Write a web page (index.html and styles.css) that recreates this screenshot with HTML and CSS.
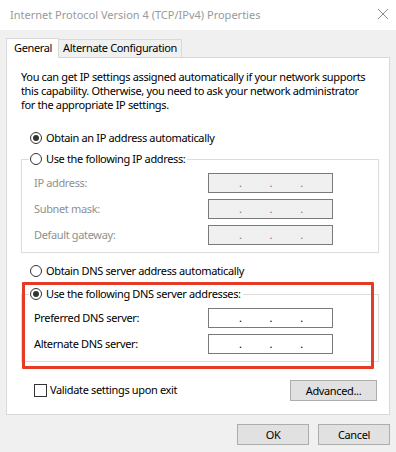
FILE: index.html
```html
<!DOCTYPE html>
<html>
<head>
<meta charset="utf-8">
<link rel="stylesheet" href="styles.css">
</head>
<body>
<div class="window">
  <div class="titlebar">
    <span class="title">Internet Protocol Version 4 (TCP/IPv4) Properties</span>
    <svg class="close" width="12" height="12" viewBox="0 0 12 12"><path d="M1 1 L11 11 M11 1 L1 11" stroke="#8a8a8a" stroke-width="1" fill="none"/></svg>
  </div>
  <div class="body">
    <div class="tabs">
      <div class="tab active">General</div>
      <div class="tab">Alternate Configuration</div>
    </div>
    <div class="panel">
      <p class="desc">You can get IP settings assigned automatically if your network supports<br>this capability. Otherwise, you need to ask your network administrator<br>for the appropriate IP settings.</p>
      <div class="option first"><span class="radio checked"></span><span>Obtain an IP address automatically</span></div>
      <fieldset class="group g1">
        <legend><span class="radio"></span><span>Use the following IP address:</span></legend>
        <div class="rows">
          <div class="field disabled"><span class="flabel">IP address:</span><span class="ip"><i></i>.<i></i>.<i></i>.<i></i></span></div>
          <div class="field disabled"><span class="flabel">Subnet mask:</span><span class="ip"><i></i>.<i></i>.<i></i>.<i></i></span></div>
          <div class="field disabled"><span class="flabel">Default gateway:</span><span class="ip"><i></i>.<i></i>.<i></i>.<i></i></span></div>
        </div>
      </fieldset>
      <div class="option dns"><span class="radio"></span><span>Obtain DNS server address automatically</span></div>
      <fieldset class="group g2">
        <legend><span class="radio checked"></span><span>Use the following DNS server addresses:</span></legend>
        <div class="rows">
          <div class="field"><span class="flabel">Preferred DNS server:</span><span class="ip"><i></i>.<i></i>.<i></i>.<i></i></span></div>
          <div class="field"><span class="flabel">Alternate DNS server:</span><span class="ip"><i></i>.<i></i>.<i></i>.<i></i></span></div>
        </div>
      </fieldset>
      <div class="bottomrow">
        <div class="check"><span class="box"></span><span>Validate settings upon exit</span></div>
        <div class="btn adv">Advanced...</div>
      </div>
      <div class="highlight"></div>
    </div>
    <div class="buttons">
      <div class="btn">OK</div>
      <div class="btn">Cancel</div>
    </div>
  </div>
</div>
</body>
</html>
```

FILE: styles.css
```css
* { box-sizing: border-box; }
html, body { margin: 0; padding: 0; }
body {
  font-family: "Noto Sans", "Open Sans", sans-serif;
  font-size: 11px;
  line-height: 16px;
  letter-spacing: -0.35px;
  color: #000;
  background: #f0f0f0;
  white-space: nowrap;
}
.window {
  width: 396px;
  height: 452px;
  background: #f0f0f0;
  overflow: hidden;
}
.titlebar {
  height: 30px;
  background: #fff;
  display: flex;
  align-items: center;
  justify-content: space-between;
  padding: 0 7px 0 10px;
}
.title { color: #999; font-size: 11px; line-height: 16px; letter-spacing: 0; margin-top: -1px; }
.close { display: block; margin-top: -2px; }
.body { padding: 8px 6px 0 6px; }
.tabs {
  display: flex;
  align-items: flex-end;
  margin-bottom: -1px;
  position: relative;
  z-index: 1;
}
.tab {
  height: 18px;
  border: 1px solid #d9d9d9;
  border-bottom: none;
  background: #f0f0f0;
  padding: 0 4px 0 4px;
  line-height: 16px;
  margin-bottom: 1px;
  margin-left: -1px;
}
.tab.active {
  height: 20px;
  background: #fff;
  padding: 0 6px 0 7px;
  margin-left: 0;
  margin-bottom: 0;
  line-height: 18px;
  position: relative;
  z-index: 2;
}
.panel {
  position: relative;
  height: 358px;
  background: #fff;
  border: 1px solid #d9d9d9;
  padding: 12px 10px 0 14px;
}
.desc { margin: 0; line-height: 14px; height: 42px; }
.option {
  display: flex;
  align-items: center;
  height: 16px;
  padding-left: 9px;
}
.option.first { margin-top: 18px; }
.option.dns { margin-top: 10px; }
.radio {
  width: 12px;
  height: 12px;
  border: 1px solid #333;
  border-radius: 50%;
  background: #fff;
  margin-right: 4px;
  position: relative;
  flex: none;
}
.radio.checked::after {
  content: "";
  position: absolute;
  left: 2px;
  top: 2px;
  width: 6px;
  height: 6px;
  border-radius: 50%;
  background: #333;
}
.group {
  margin: 5px 0 0 0;
  padding: 0;
  border: 1px solid #dcdcdc;
  min-width: 0;
}
.group.g2 { margin-top: 7px; }
.group legend {
  display: flex;
  align-items: center;
  height: 16px;
  padding: 0 2px 0 1px;
  margin-left: 7px;
}
.rows {
  display: flex;
  flex-direction: column;
  gap: 6px;
  padding: 6px 0 7px 12px;
}
.field {
  display: flex;
  align-items: center;
  height: 20px;
}
.flabel { width: 174px; flex: none; }
.field.disabled .flabel { color: #8f8f8f; }
.ip {
  width: 125px;
  height: 20px;
  border: 1px solid #7a7a7a;
  background: #fff;
  display: flex;
  align-items: center;
  padding-left: 2px;
  line-height: 16px;
  font-size: 11px;
}
.ip i { width: 28px; flex: none; }
.ip i:last-child { display: none; }
.field.disabled .ip { background: #f0f0f0; color: #777; }
.bottomrow {
  display: flex;
  justify-content: space-between;
  align-items: flex-start;
  margin-top: 18px;
  padding-right: 2px;
}
.check {
  display: flex;
  align-items: center;
  height: 16px;
  margin-top: 2px;
  padding-left: 13px;
}
.box {
  width: 13px;
  height: 13px;
  border: 1px solid #333;
  background: #fff;
  margin-right: 3px;
}
.btn {
  height: 21px;
  background: #e1e1e1;
  border: 1px solid #adadad;
  display: flex;
  align-items: center;
  justify-content: center;
  line-height: 16px;
}
.adv { width: 87px; }
.buttons {
  display: flex;
  justify-content: flex-end;
  gap: 9px;
  margin-top: 9px;
}
.buttons .btn { width: 72px; }
.highlight {
  position: absolute;
  left: 15px;
  top: 224px;
  width: 352px;
  height: 87px;
  border: 3px solid #e33b26;
  border-radius: 1px;
}
```
